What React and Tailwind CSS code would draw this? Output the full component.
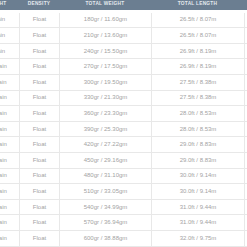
import React from 'react';

const rows = [
  ['180gr / 11.60gm', '26.5ft / 8.07m'],
  ['210gr / 13.60gm', '26.5ft / 8.07m'],
  ['240gr / 15.50gm', '26.9ft / 8.19m'],
  ['270gr / 17.50gm', '26.9ft / 8.19m'],
  ['300gr / 19.50gm', '27.5ft / 8.38m'],
  ['330gr / 21.30gm', '27.5ft / 8.38m'],
  ['360gr / 23.30gm', '28.0ft / 8.53m'],
  ['390gr / 25.30gm', '28.0ft / 8.53m'],
  ['420gr / 27.22gm', '29.0ft / 8.83m'],
  ['450gr / 29.16gm', '29.0ft / 8.83m'],
  ['480gr / 31.10gm', '30.0ft / 9.14m'],
  ['510gr / 33.05gm', '30.0ft / 9.14m'],
  ['540gr / 34.99gm', '31.0ft / 9.44m'],
  ['570gr / 36.94gm', '31.0ft / 9.44m'],
  ['600gr / 38.88gm', '32.0ft / 9.75m'],
];

const cols = 'grid grid-cols-[46px_40px_92px_93px_60px]';

const App = () => {
  return (
    <div className="w-[247px] h-[247px] overflow-hidden bg-white font-['Liberation_Sans',Arial,sans-serif]">
      <div className="ml-[-27px] mt-[-2px] w-[331px]">
        {/* Header */}
        <div className={`${cols} h-[12px] bg-[#6b7e91] text-[#e4e9ee] text-[4.8px] font-bold tracking-[0.25px] uppercase items-center text-center`}>
          <div>Weight</div>
          <div>Density</div>
          <div>Total Weight</div>
          <div>Total Length</div>
          <div>Sink Rate</div>
        </div>
        <div className="h-[2.7px]" />

        {/* Rows */}
        {rows.map((r, i) => (
          <div key={i} className={`${cols} h-[15.6px] border-b border-[#e8e8e8] text-[6px] text-[#a3a3a3] items-stretch text-center`}>
            <div className="flex items-center justify-center">{i + 7} grain</div>
            <div className="flex items-center justify-center border-l border-[#e8e8e8]">Float</div>
            <div className="flex items-center justify-center border-l border-[#e8e8e8]">{r[0]}</div>
            <div className="flex items-center justify-center border-l border-[#e8e8e8]">{r[1]}</div>
            <div className="flex items-center justify-center border-l border-[#e8e8e8]">-</div>
          </div>
        ))}
      </div>
    </div>
  );
};

export default App;
